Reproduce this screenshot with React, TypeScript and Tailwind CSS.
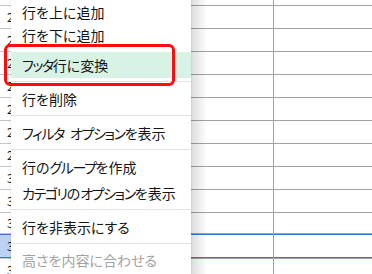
import React from 'react';

type Item = { label: string; h: number; active?: boolean; disabled?: boolean };

const groups: Item[][] = [
  [
    { label: '行を上に追加', h: 23 },
    { label: '行を下に追加', h: 29 },
    { label: 'フッタ行に変換', h: 26, active: true },
  ],
  [{ label: '行を削除', h: 26 }],
  [{ label: 'フィルタ オプションを表示', h: 26 }],
  [
    { label: '行のグループを作成', h: 26 },
    { label: 'カテゴリのオプションを表示', h: 26 },
  ],
  [{ label: '行を非表示にする', h: 26 }],
  [{ label: '高さを内容に合わせる', h: 24, disabled: true }],
];

const plainRows = [22, 23, 24, 25, 26, 27, 28, 29, 30, 31];

const Label: React.FC<{ text: string }> = ({ text }) => {
  const parts = text.split(/([ァ-ヶー]+| )/);
  return (
    <span>
      {parts.map((p, i) => {
        if (p === ' ') {
          return (
            <span key={i} className="tracking-[3px]">
              {' '}
            </span>
          );
        }
        if (/^[ァ-ヶー]+$/.test(p)) {
          return (
            <span key={i} className="tracking-[-1.4px]">
              {p}
            </span>
          );
        }
        return <span key={i}>{p}</span>;
      })}
    </span>
  );
};

const Sheet: React.FC = () => {
  return (
    <div className="-mt-[17px] flex flex-col text-[12px] text-[#222]">
      {plainRows.map((n) => (
        <div key={n} className="flex h-[23px]">
          <div className="w-[44px] border-b border-[#c4c4c4] pl-[7px] flex items-center">{n}</div>
          <div className="w-[230px] border-b border-r border-[#a3a3a3]" />
          <div className="flex-1 border-b border-[#a3a3a3]" />
        </div>
      ))}
      <div className="flex h-[21px]">
        <div className="w-[44px] border-b border-[#c4c4c4] pl-[7px] flex items-center">32</div>
        <div className="w-[230px] border-b border-r border-[#a3a3a3]" />
        <div className="flex-1 border-b border-[#a3a3a3]" />
      </div>
      <div className="flex h-[24px]">
        <div className="w-[44px] bg-[#bdd1f3] border-y border-[#3f76d4] pl-[7px] flex items-center">33</div>
        <div className="w-[230px] border-y border-r border-[#3f76d4] border-r-[#a3a3a3]" />
        <div className="flex-1 border-y border-[#3f76d4]" />
      </div>
      <div className="flex h-[23px]">
        <div className="w-[44px] border-t border-[#c4c4c4] pl-[7px] flex items-center">34</div>
        <div className="w-[230px] border-t border-r border-[#a3a3a3]" />
        <div className="flex-1 border-t border-[#a3a3a3]" />
      </div>
    </div>
  );
};

export default function App() {
  return (
    <div className="relative w-[372px] h-[274px] overflow-hidden bg-white font-['Noto_Sans_CJK_JP','Noto_Sans',sans-serif]">
      <Sheet />

      {/* context menu */}
      <div className="absolute left-[11px] top-0 w-[180px] h-[274px] bg-white shadow-[0_0_2px_rgba(0,0,0,0.12)]">
        <div className="flex flex-col text-[14px] leading-none [font-feature-settings:'palt']">
          {groups.map((g, gi) => (
            <React.Fragment key={gi}>
              {gi > 0 && (
                <div className="pt-[3px] pb-[4px]">
                  <div className="h-px bg-[#e2e2e2]" />
                </div>
              )}
              {g.map((it) => (
                <div
                  key={it.label}
                  className={`flex pl-[11px] ${it.h === 29 ? 'items-start pt-[5px]' : 'items-center'} ${
                    it.active ? 'bg-[#d9f2e6]' : ''
                  } ${it.disabled ? 'text-[#a2a2a2]' : 'text-[#141414]'}`}
                  style={{ height: it.h }}
                >
                  <Label text={it.label} />
                </div>
              ))}
            </React.Fragment>
          ))}
        </div>
      </div>
      <div className="absolute left-[191px] top-0 h-full w-[16px] bg-linear-to-r from-black/[0.14] to-transparent" />

      {/* annotation */}
      <div className="absolute left-[4px] top-[44px] w-[171px] h-[42px] border-[3px] border-[#ff0d0d] rounded-[6px]" />
    </div>
  );
}
